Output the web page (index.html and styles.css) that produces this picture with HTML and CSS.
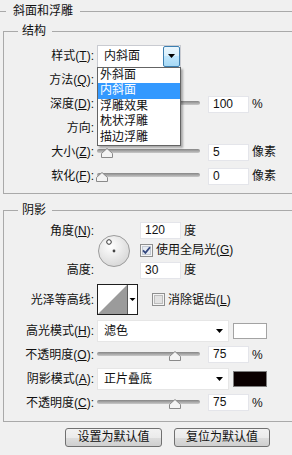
FILE: index.html
```html
<!DOCTYPE html>
<html lang="zh-CN">
<head>
<meta charset="utf-8">
<title>斜面和浮雕</title>
<link rel="stylesheet" href="styles.css">
</head>
<body>
<div class="panel">
  <div class="title"><span>斜面和浮雕</span></div>

  <div class="gh"><span>结构</span></div>
  <div class="gbody struct">
    <div class="row">
      <span class="lbl">样式(<u>T</u>):</span>
      <div class="select">
        <span class="sel-text">内斜面</span>
        <span class="sel-btn"><svg width="7" height="4" viewBox="0 0 7 4"><polygon points="0,0 7,0 3.5,4" fill="#000"/></svg></span>
        <ul class="popup">
          <li>外斜面</li>
          <li class="hl">内斜面</li>
          <li>浮雕效果</li>
          <li>枕状浮雕</li>
          <li>描边浮雕</li>
        </ul>
      </div>
    </div>
    <div class="row"><span class="lbl">方法(<u>Q</u>):</span></div>
    <div class="row">
      <span class="lbl">深度(<u>D</u>):</span>
      <div class="slider"><div class="track"></div><svg class="thumb" style="left:10px" width="12" height="10" viewBox="0 0 12 10"><polygon points="0.5,9.5 0.5,5.5 6,0.5 11.5,5.5 11.5,9.5" fill="#f4f4f4" stroke="#8a8a8a"/></svg></div>
      <span class="num">100</span><span class="unit">%</span>
    </div>
    <div class="row"><span class="lbl">方向:</span></div>
    <div class="row">
      <span class="lbl">大小(<u>Z</u>):</span>
      <div class="slider"><div class="track"></div><svg class="thumb" style="left:10px" width="12" height="10" viewBox="0 0 12 10"><polygon points="0.5,9.5 0.5,5.5 6,0.5 11.5,5.5 11.5,9.5" fill="#f4f4f4" stroke="#8a8a8a"/></svg></div>
      <span class="num">5</span><span class="unit">像素</span>
    </div>
    <div class="row">
      <span class="lbl">软化(<u>F</u>):</span>
      <div class="slider"><div class="track"></div><svg class="thumb" style="left:5px" width="12" height="10" viewBox="0 0 12 10"><polygon points="0.5,9.5 0.5,5.5 6,0.5 11.5,5.5 11.5,9.5" fill="#f4f4f4" stroke="#8a8a8a"/></svg></div>
      <span class="num">0</span><span class="unit">像素</span>
    </div>
  </div>

  <div class="gh gh2"><span>阴影</span></div>
  <div class="gbody shadow">
    <div class="sgrid">
      <span class="lbl r1">角度(<u>N</u>):</span>
      <svg class="dial" width="32" height="32" viewBox="0 0 32 32">
        <defs>
          <radialGradient id="dg" cx="40%" cy="35%" r="70%">
            <stop offset="0" stop-color="#ffffff"/>
            <stop offset="1" stop-color="#d6d6d6"/>
          </radialGradient>
        </defs>
        <circle cx="16" cy="16" r="15.5" fill="url(#dg)" stroke="#9c9c9c"/>
        <circle cx="16" cy="16" r="1.4" fill="#444"/>
        <circle cx="11" cy="7" r="2.3" fill="#fff" stroke="#333"/>
      </svg>
      <div class="cell r1"><span class="num n2">120</span><span class="unit">度</span></div>
      <div class="cell r2">
        <svg class="chk" width="13" height="13" viewBox="0 0 13 13">
          <rect x="0.5" y="0.5" width="12" height="12" fill="#f5f5f5" stroke="#8e8f8f"/>
          <rect x="2.5" y="2.5" width="8" height="8" fill="#e6ebf2" stroke="#c4cad3"/>
          <path d="M3 6.3 L5.4 8.8 L10 3.2" fill="none" stroke="#33477e" stroke-width="1.8"/>
        </svg>
        <span class="ctext">使用全局光(<u>G</u>)</span>
      </div>
      <span class="lbl r3">高度:</span>
      <div class="cell r3"><span class="num n2">30</span><span class="unit">度</span></div>
    </div>

    <div class="row crow">
      <span class="lbl">光泽等高线:</span>
      <svg class="contour" width="41" height="31" viewBox="0 0 41 31">
        <rect x="0.5" y="0.5" width="40" height="30" fill="#fff" stroke="#1e1e1e"/>
        <polygon points="1,30 30,1 30,30" fill="#9b9b9b"/>
        <line x1="30.5" y1="1" x2="30.5" y2="30" stroke="#5a5a5a"/>
        <polygon points="32.5,14 38.5,14 35.5,17" fill="#000"/>
      </svg>
      <svg class="chk chk2" width="13" height="13" viewBox="0 0 13 13">
        <rect x="0.5" y="0.5" width="12" height="12" fill="#f5f5f5" stroke="#8e8f8f"/>
        <rect x="2.5" y="2.5" width="8" height="8" fill="#e2e2e2" stroke="#bdbdbd"/>
      </svg>
      <span class="ctext">消除锯齿(<u>L</u>)</span>
    </div>

    <div class="row mrow">
      <span class="lbl">高光模式(<u>H</u>):</span>
      <div class="dd"><span>滤色</span><svg width="7" height="4" viewBox="0 0 7 4"><polygon points="0,0 7,0 3.5,4" fill="#000"/></svg></div>
      <span class="swatch white"></span>
    </div>
    <div class="row orow">
      <span class="lbl">不透明度(<u>O</u>):</span>
      <div class="slider"><div class="track"></div><svg class="thumb" style="left:78px" width="12" height="10" viewBox="0 0 12 10"><polygon points="0.5,9.5 0.5,5.5 6,0.5 11.5,5.5 11.5,9.5" fill="#f4f4f4" stroke="#8a8a8a"/></svg></div>
      <span class="num">75</span><span class="unit">%</span>
    </div>
    <div class="row mrow">
      <span class="lbl">阴影模式(<u>A</u>):</span>
      <div class="dd"><span>正片叠底</span><svg width="7" height="4" viewBox="0 0 7 4"><polygon points="0,0 7,0 3.5,4" fill="#000"/></svg></div>
      <span class="swatch black"></span>
    </div>
    <div class="row orow">
      <span class="lbl">不透明度(<u>C</u>):</span>
      <div class="slider"><div class="track"></div><svg class="thumb" style="left:78px" width="12" height="10" viewBox="0 0 12 10"><polygon points="0.5,9.5 0.5,5.5 6,0.5 11.5,5.5 11.5,9.5" fill="#f4f4f4" stroke="#8a8a8a"/></svg></div>
      <span class="num">75</span><span class="unit">%</span>
    </div>
  </div>

  <div class="buttons">
    <button class="btn b1" type="button">设置为默认值</button>
    <button class="btn b2" type="button">复位为默认值</button>
  </div>
</div>
</body>
</html>
```
FILE: styles.css
```css
html, body {
  margin: 0;
  padding: 0;
  overflow: hidden;
}
body {
  width: 292px;
  height: 455px;
  background: #f0f0f0;
  color: #111;
  font: 12px/14px "Liberation Sans", "Noto Sans CJK SC", sans-serif;
}
u { text-decoration: underline; text-underline-offset: 1px; }

.panel { padding-top: 4px; }

/* outer title */
.title { display: flex; height: 14px; }
.title::before {
  content: "";
  width: 6px;
  margin-top: 7px;
  border-top: 1px solid #a9a9a9;
}
.title span { padding: 0 7px 0 7px; }
.title::after {
  content: "";
  flex: 1;
  margin-top: 7px;
  border-top: 1px solid #a9a9a9;
}

/* group header + body */
.gh {
  display: flex;
  height: 14px;
  margin: 6px 0 0 3px;
}
.gh::before {
  content: "";
  width: 14px;
  margin-top: 7px;
  border-top: 1px solid #a9a9a9;
  border-left: 1px solid #a9a9a9;
}
.gh span { padding: 0 6px 0 4px; }
.gh::after {
  content: "";
  flex: 1;
  margin-top: 7px;
  border-top: 1px solid #a9a9a9;
}
.gh2 { margin-top: 9px; }

.gbody {
  margin-left: 3px;
  border-left: 1px solid #a9a9a9;
  border-bottom: 1px solid #a9a9a9;
}
.struct { padding: 6px 0 5px 0; }
.shadow { padding: 4px 0 10px 0; }

.row {
  display: flex;
  align-items: center;
  height: 24px;
}
.lbl {
  flex: none;
  width: 90px;
  margin-right: 3px;
  text-align: right;
  white-space: nowrap;
}

/* style select with popup */
.select {
  position: relative;
  display: flex;
  width: 84px;
  height: 23px;
  box-sizing: border-box;
  background: #fff;
  border: 1px solid #c9cbd1;
}
.sel-text { padding-left: 6px; line-height: 21px; flex: 1; }
.sel-btn {
  display: flex;
  align-items: center;
  justify-content: center;
  width: 17px;
  box-sizing: border-box;
  border: 1px solid #3c7fb1;
  border-radius: 2px;
  background: linear-gradient(#eaf6fd 0%, #d9f0fc 45%, #bee6fd 50%, #a7d9f5 100%);
}
.popup {
  position: absolute;
  left: -1px;
  top: 100%;
  width: 84px;
  box-sizing: border-box;
  margin: 0;
  padding: 0;
  list-style: none;
  background: #fff;
  border: 1px solid #646464;
  box-shadow: 2px 2px 2px rgba(0, 0, 0, 0.3);
  z-index: 2;
}
.popup li {
  height: 15.6px;
  line-height: 15.6px;
  padding-left: 2px;
  white-space: nowrap;
}
.popup li.hl { background: #3399ff; color: #fff; }

/* sliders */
.slider {
  position: relative;
  flex: none;
  width: 103px;
  height: 12px;
}
.track {
  margin-top: 3px;
  height: 4px;
  border-radius: 2px;
  background: linear-gradient(#858585, #c9c9c9);
}
.thumb {
  position: absolute;
  top: 2px;
  margin-left: -6px;
}

.num {
  flex: none;
  width: 41px;
  height: 17px;
  box-sizing: border-box;
  margin-left: 8px;
  padding-left: 4px;
  background: #fff;
  border: 1px solid #e4e5ea;
  line-height: 15px;
}
.unit { margin-left: 3px; }

/* shadow grid */
.sgrid {
  display: grid;
  grid-template-columns: 93px 43px 1fr;
  grid-template-rows: 19px 20px 20px;
  align-items: center;
}
.sgrid .lbl { width: 90px; }
.r1 { grid-row: 1; }
.r2 { grid-row: 2; grid-column: 3; }
.r3 { grid-row: 3; }
.sgrid .lbl.r1, .sgrid .lbl.r3 { grid-column: 1; }
.cell.r1, .cell.r3 { grid-column: 3; }
.dial {
  grid-column: 2;
  grid-row: 1 / span 3;
  margin-left: 1px;
}
.cell { display: flex; align-items: center; }
.n2 { margin-left: 0; }
.chk { flex: none; }
.ctext { margin-left: 3px; white-space: nowrap; }

.crow { height: 31px; margin-top: 4px; }
.contour { flex: none; }
.chk2 { margin-left: 14px; }

.mrow { height: 22px; margin-top: 5px; }
.orow { height: 17px; margin-top: 4px; }

.dd {
  display: flex;
  align-items: center;
  justify-content: space-between;
  width: 132px;
  height: 22px;
  box-sizing: border-box;
  padding: 0 5px 0 6px;
  background: #fff;
  border: 1px solid #e6e6e6;
}
.swatch {
  flex: none;
  width: 34px;
  height: 16px;
  box-sizing: border-box;
  margin-left: 4px;
}
.swatch.white { background: #fff; border: 1px solid #a3a3a3; }
.swatch.black { background: #0a0000; border: 1px solid #7d7d7d; }

/* buttons */
.buttons {
  display: flex;
  justify-content: flex-end;
  gap: 12px;
  margin-top: 6px;
  padding-right: 22px;
}
.btn {
  height: 19px;
  padding: 0;
  font: 12px/17px "Liberation Sans", "Noto Sans CJK SC", sans-serif;
  color: #111;
  border: 1px solid #707070;
  border-radius: 3px;
  background: linear-gradient(#f2f2f2 0%, #ebebeb 50%, #dddddd 51%, #cfcfcf 100%);
}
.b1 { width: 97px; }
.b2 { width: 96px; }
```
